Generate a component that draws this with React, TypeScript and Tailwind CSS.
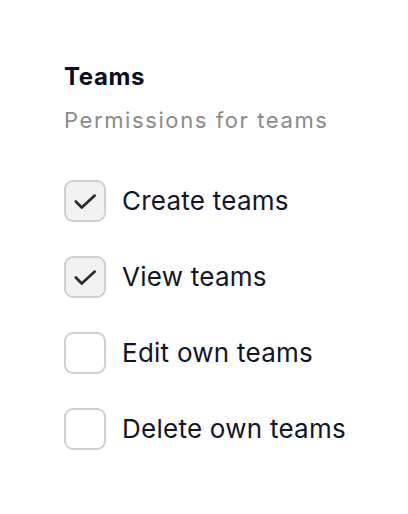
import { useState } from "react";

const items = [
  { label: "Create teams", checked: true },
  { label: "View teams", checked: true },
  { label: "Edit own teams", checked: false },
  { label: "Delete own teams", checked: false },
];

function CheckIcon() {
  return (
    <svg viewBox="0 0 24 24" className="w-[26px] h-[26px]" fill="none" stroke="#2b2b2b" strokeWidth="2.5" strokeLinecap="round" strokeLinejoin="round">
      <path d="M3.5 12.5l5.5 5.5L21 7" />
    </svg>
  );
}

export default function App() {
  const [state, setState] = useState(items.map(i => i.checked));

  return (
    <div className="min-h-screen bg-white pl-16 pr-8 pt-[62px] font-['Inter',sans-serif]">
      <h2 className="text-[24px] leading-[30px] font-bold tracking-[0.6px] text-[#0b0d1f]">Teams</h2>
      <p className="mt-[13px] text-[22px] leading-[30px] tracking-[1.6px] text-[#8a8a8a] whitespace-nowrap">Permissions for teams</p>

      <div className="mt-[45px] flex flex-col gap-[34px]">
        {items.map((item, idx) => (
          <label key={item.label} className="flex items-center gap-4 cursor-pointer">
            <button
              onClick={() => setState(s => s.map((v, i) => (i === idx ? !v : v)))}
              className={`w-[42px] h-[42px] shrink-0 rounded-[9px] border-2 border-[#d0d0d0] flex items-center justify-center ${state[idx] ? "bg-[#f2f2f2]" : "bg-white"}`}
            >
              {state[idx] && <CheckIcon />}
            </button>
            <span className="text-[26px] leading-[30px] tracking-[0.25px] text-[#13152a] whitespace-nowrap">{item.label}</span>
          </label>
        ))}
      </div>
    </div>
  );
}
